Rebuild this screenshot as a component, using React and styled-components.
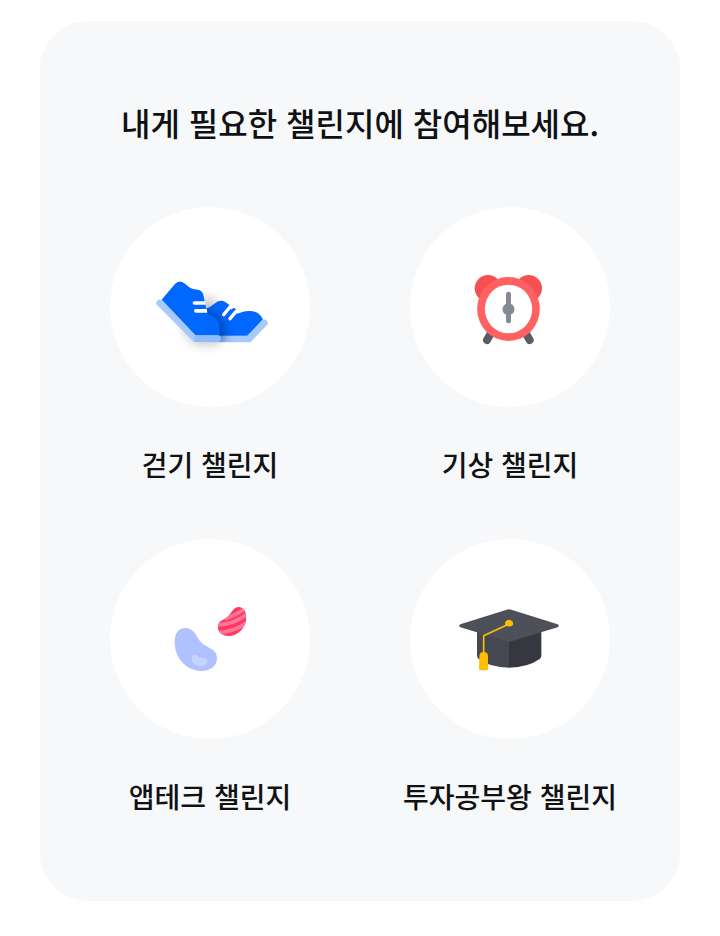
import React from "react";
import styled, { createGlobalStyle } from "styled-components";

const GlobalStyle = createGlobalStyle`
  *, *::before, *::after { box-sizing: border-box; }
  body {
    margin: 0;
    background: #ffffff;
    color: #0f1113;
    font-family: "Noto Sans CJK KR", "Noto Sans", sans-serif;
  }
`;

const Page = styled.main`
  padding: 21px 40px 35px;
`;

const Card = styled.section`
  padding: 77px 20px 85px;
  border-radius: 48px;
  background: #f7f8fa;
`;

const Title = styled.h1`
  margin: 0 0 61px;
  font-size: 32px;
  font-weight: 500;
  line-height: 48px;
  text-align: center;
`;

const ChallengeGrid = styled.ul`
  display: grid;
  grid-template-columns: repeat(2, minmax(0, 1fr));
  row-gap: 55px;
  margin: 0;
  padding: 0;
  list-style: none;
`;

const Challenge = styled.a`
  display: flex;
  flex-direction: column;
  align-items: center;
  gap: 37px;
  color: inherit;
  text-decoration: none;
`;

const Circle = styled.span`
  display: block;
  width: 200px;
  height: 200px;
  border-radius: 50%;
  background: #ffffff;
`;

const Icon = styled.svg`
  display: block;
  width: 100%;
  height: 100%;
`;

const Label = styled.span`
  font-size: 28px;
  font-weight: 500;
  line-height: 40px;
  white-space: nowrap;
`;

function ShoesIcon() {
  return (
    <Icon viewBox="0 0 600 600" aria-hidden="true">
      <defs>
        <filter id="shoe-blur" x="-60%" y="-60%" width="220%" height="220%">
          <feGaussianBlur stdDeviation="16" />
        </filter>
        <clipPath id="back-shoe">
          <path d="M182 132Q198 126 207 117Q224 101 241 111Q259 124 288 141Q337 130 354 163L364 170L314 232H180Z" />
        </clipPath>
      </defs>
      <g transform="translate(105 174)">
        <path d="M110 190L150 238H226L212 106L180 95Z" fill="#000" opacity=".24" filter="url(#shoe-blur)" />
        <path d="M210 222H312L358 174" fill="none" stroke="#a6caff" strokeWidth="20" strokeLinecap="round" />
        <path d="M180 132Q197 127 207 117Q224 101 241 111Q263 128 288 142Q337 128 354 163L307 212H180Z" fill="#0067ff" />
        <g clipPath="url(#back-shoe)">
          <path d="M175 120L200 148L234 180V234H175Z" fill="#00296f" opacity=".75" filter="url(#shoe-blur)" />
        </g>
        <path d="M236 149L255 126M255 161L273 140" fill="none" stroke="#fff" strokeWidth="10" strokeLinecap="round" />
        <path d="M250 123L262 116L269 127L258 134ZM268 137L280 130L290 142L276 146Z" fill="#fff" />
        <path d="M44 114L151 221H217" fill="none" stroke="#a6caff" strokeWidth="20" strokeLinecap="round" strokeLinejoin="miter" />
        <path d="M50 104L89 58Q102 43 117 54L136 69Q143 73 158 74Q171 76 175 89L187 146Q224 158 224 187V211H152Z" fill="#0067ff" />
        <path d="M148 109H180L182 119H148Q143 119 143 114Q143 109 148 109ZM152 132H185L187 143H152Q147 143 147 137.500Q147 132 152 132Z" fill="#fff" />
        <path d="M150 211H219Q227 212 227 220Q227 231 217 231H148Z" fill="#8fbcff" />
      </g>
    </Icon>
  );
}

function AlarmIcon() {
  return (
    <Icon viewBox="0 0 600 600" aria-hidden="true">
      <g transform="translate(150 159)">
        <path d="M91 223L81 240M199 223L209 240" stroke="#5a5b65" strokeWidth="24" strokeLinecap="round" />
        <circle cx="84" cy="85" r="40" fill="#f65052" />
        <circle cx="206" cy="85" r="40" fill="#f65052" />
        <ellipse cx="145.500" cy="147" rx="94" ry="96" fill="#ff6163" />
        <ellipse cx="145.500" cy="147" rx="71" ry="73" fill="#fff" />
        <path d="M145.500 103V182" stroke="#848993" strokeWidth="15" strokeLinecap="round" />
        <circle cx="145.500" cy="148" r="18" fill="#848993" />
      </g>
    </Icon>
  );
}

function BeansIcon() {
  return (
    <Icon viewBox="0 0 600 600" aria-hidden="true">
      <defs>
        <clipPath id="red-bean">
          <path d="M235 51C248 50 259 63 259 83C258 112 235 138 205 138C188 138 173 127 174 111C174 98 181 93 193 87C216 75 216 52 235 51Z" />
        </clipPath>
      </defs>
      <g transform="translate(150 153)">
        <path d="M75 114C95 114 105 127 115 146C133 176 171 171 171 204C171 228 151 243 125 243C77 243 44 202 44 157C44 130 55 114 75 114Z" fill="#afc2ff" />
        <path d="M95 206C94 195 105 190 113 198C121 207 137 200 141 209C145 222 132 229 122 228C106 228 95 218 95 206Z" fill="#c6d5ff" />
        <g clipPath="url(#red-bean)">
          <path d="M165 40H265V145H165Z" fill="#ff3866" />
          <path d="M168 105Q224 104 265 69M172 128Q222 126 264 96M194 86Q229 76 261 52" fill="none" stroke="#ff7697" strokeWidth="11" />
        </g>
      </g>
    </Icon>
  );
}

function GraduationIcon() {
  return (
    <Icon viewBox="0 0 600 600" aria-hidden="true">
      <g transform="translate(120 168)">
        <path d="M81 108H177V218Q121 218 86 192Q81 188 81 182Z" fill="#454850" />
        <path d="M177 108H274V182Q274 188 269 192Q232 218 177 218Z" fill="#373740" />
        <path d="M31 88L170 44Q177 41 184 44L323 88Q330 92 323 97L184 139Q177 142 170 139L31 97Q24 92 31 88Z" fill="#4e5059" />
        <path d="M177 87L101 122V180" fill="none" stroke="#ffbf00" strokeWidth="5" strokeLinejoin="round" />
        <path d="M166 91A12 12 0 1 1 188 91Q177 98 166 91Z" fill="#ffbf00" />
        <path d="M88 184Q88 171 101 171Q114 171 114 184V221Q114 226 109 226H92Q87 226 87 221Z" fill="#ffbf00" />
      </g>
    </Icon>
  );
}

const challenges = [
  { id: "walk", name: "걷기 챌린지", Picture: ShoesIcon },
  { id: "wake", name: "기상 챌린지", Picture: AlarmIcon },
  { id: "apptech", name: "앱테크 챌린지", Picture: BeansIcon },
  { id: "invest", name: "투자공부왕 챌린지", Picture: GraduationIcon },
];

export default function App() {
  return (
    <>
      <GlobalStyle />
      <Page lang="ko">
        <Card aria-labelledby="challenge-title">
          <Title id="challenge-title">내게 필요한 챌린지에 참여해보세요.</Title>
          <ChallengeGrid>
            {challenges.map(({ id, name, Picture }) => (
              <li key={id}>
                <Challenge href={`#${id}`}>
                  <Circle>
                    <Picture />
                  </Circle>
                  <Label>{name}</Label>
                </Challenge>
              </li>
            ))}
          </ChallengeGrid>
        </Card>
      </Page>
    </>
  );
}
